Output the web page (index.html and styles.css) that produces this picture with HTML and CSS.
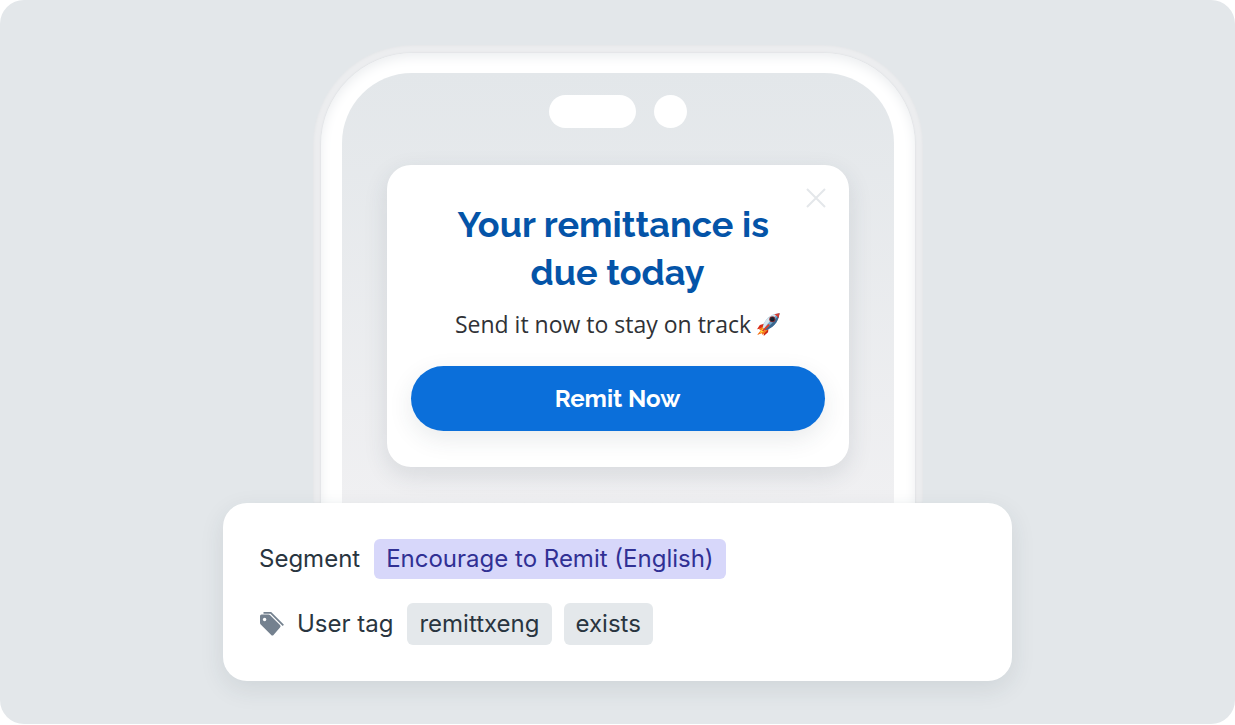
FILE: index.html
```html
<!DOCTYPE html>
<html lang="en">
<head>
<meta charset="utf-8">
<meta name="viewport" content="width=device-width, initial-scale=1">
<title>Remittance reminder</title>
<link rel="stylesheet" href="styles.css">
</head>
<body>
<main class="stage">
  <div class="phone">
    <div class="bezel">
      <div class="screen">
        <div class="cameras"><span class="speaker"></span><span class="lens"></span></div>
        <section class="card">
          <button class="close" type="button" aria-label="Close">
            <svg width="20" height="20" viewBox="0 0 20 20" fill="none" stroke="#e4e7ea" stroke-width="2"><path d="M1 1L19 19M19 1L1 19"/></svg>
          </button>
          <h1 class="title">Your remittance is&nbsp;<br>due today</h1>
          <p class="message">Send it now to stay on track
            <svg class="rocket" width="23" height="23" viewBox="0 0 24 24" role="img" aria-label="rocket">
              <path d="M8 11L3 12.500L0 17L6 16Z" fill="#d92b18"/>
              <path d="M12 16L11.500 20L7 24L8 17Z" fill="#c82014"/>
              <path d="M6 14L2 17L4 18L0 23L5 21L6 23L11 18Z" fill="#f5761c"/>
              <path d="M6 16L4 18.500L3 21L6 19.500L9 18Z" fill="#ffdf38"/>
              <path d="M6 15C8 7 13 1.500 23.500 0C22.500 10 16 16 9 18Z" fill="#71a9cf"/>
              <path d="M6 15C8 7 13 1.500 23.500 0C18 4 12 9 7.500 16.500Z" fill="#d8e6ee"/>
              <path d="M9 18C16 16 22.500 10 23.500 0C20 7 14 13 8 17Z" fill="#3b678f"/>
              <path d="M18 1.500L23.500 0L22.500 5.500Q21 2.500 18 1.500Z" fill="#d43a30"/>
              <circle cx="16" cy="6.500" r="3.200" fill="#8b3036"/>
              <circle cx="16" cy="6.500" r="2.300" fill="#17212d"/>
              <path d="M5 18.500L12 11.500L13.500 12.500L7 19Z" fill="#e13b24"/>
            </svg>
          </p>
          <button class="action" type="button">Remit Now</button>
        </section>
      </div>
    </div>
  </div>
  <section class="panel">
    <div class="row">
      <span class="label">Segment</span>
      <span class="chip chip-segment">Encourage to Remit (English)</span>
    </div>
    <div class="row">
      <span class="label">
        <svg width="26" height="26" viewBox="0 0 26 26" aria-hidden="true">
          <path d="M2.500 3.500H9.500Q10.500 3.500 11.200 4.200L21 14Q22.200 15.200 21 16.400L14.500 24Q13.400 25.200 12.200 24L1.700 13.500Q1 12.800 1 11.800V5Q1 3.500 2.500 3.500Z" fill="#74818f"/>
          <circle cx="5.600" cy="8.500" r="1.700" fill="#fff"/>
          <path d="M4.500 1.800H11.800L24.300 14.300" fill="none" stroke="#74818f" stroke-width="1.800"/>
        </svg>
        User tag
      </span>
      <span class="chip">remittxeng</span>
      <span class="chip">exists</span>
    </div>
  </section>
</main>
</body>
</html>
```
FILE: styles.css
```css
* { box-sizing: border-box; }
body { margin: 0; background: #fff; }
.stage {
  display: flex;
  flex-direction: column;
  align-items: center;
  min-height: calc(100vh - 1px);
  padding: 45px 24px 43px;
  border-radius: 24px;
  background: #e3e7ea;
}
.phone {
  width: 100%;
  max-width: 610px;
  padding: 8px 8px 0;
  border-radius: 100px 100px 0 0;
  background: #ecedef;
  box-shadow: inset 0 0 3px #dde0e3;
}
.bezel {
  padding: 20px 21px 0;
  border-radius: 92px 92px 0 0;
  background: #fff;
  box-shadow: 0 0 2px #d0d4d8, inset 0 4px 12px #eceef0;
}
.screen {
  padding: 22px 45px 36px;
  border-radius: 70px 70px 0 0;
  background: linear-gradient(#e3e7ea, #f0f0f2);
}
.cameras {
  display: flex;
  justify-content: center;
  gap: 18px;
  margin-bottom: 37px;
}
.speaker, .lens { height: 33px; border-radius: 17px; background: #fff; }
.speaker { width: 87px; }
.lens { width: 33px; }
.card {
  position: relative;
  padding: 35px 24px 36px;
  border-radius: 24px;
  background: #fff;
  box-shadow: 0 8px 24px rgba(40, 55, 70, 0.12);
  text-align: center;
}
.close {
  position: absolute;
  top: 23px;
  right: 23px;
  display: flex;
  padding: 0;
  border: 0;
  background: none;
}
.title {
  margin: 0 0 8px;
  color: #0454a8;
  font: 700 36px/48px Raleway, Lato, sans-serif;
}
.message {
  margin: 0 0 22px;
  color: #303236;
  font: 400 23px/40px "Open Sans", "Noto Sans", sans-serif;
}
.rocket { vertical-align: -3px; }
.action {
  width: 100%;
  height: 65px;
  border: 0;
  border-radius: 33px;
  background: #0b6fda;
  box-shadow: 0 8px 24px rgba(40, 55, 70, 0.1);
  color: #fff;
  font: 700 24px/32px Raleway, Lato, sans-serif;
}
.panel {
  position: relative;
  display: flex;
  flex-direction: column;
  gap: 24px;
  width: 100%;
  max-width: 789px;
  padding: 36px;
  border-radius: 24px;
  background: #fff;
  box-shadow: 0 8px 24px rgba(40, 55, 70, 0.1);
  color: #293540;
  font: 400 24px/40px Inter, sans-serif;
}
.row {
  display: flex;
  flex-wrap: wrap;
  align-items: center;
  gap: 12px;
}
.label {
  display: flex;
  align-items: center;
  gap: 12px;
  margin-right: 2px;
}
.chip {
  padding: 1px 12px;
  border-radius: 6px;
  background: #e4e8eb;
}
.chip-segment {
  padding: 0 12px;
  background: #d7d7fa;
  color: #303094;
}
```
